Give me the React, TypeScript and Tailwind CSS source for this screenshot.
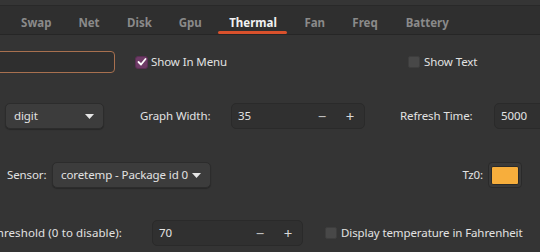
import React from "react";

const tabs: [string, string][] = [
  ["Swap", "w-[56.5px]"],
  ["Net", "w-[49px]"],
  ["Disk", "w-[52px]"],
  ["Gpu", "w-[49.5px]"],
  ["Thermal", "w-[76px]"],
  ["Fan", "w-[47.5px]"],
  ["Freq", "w-[53px]"],
  ["Battery", "w-[71.5px]"],
];

function Arrow() {
  return (
    <svg width="9" height="5" viewBox="0 0 9 5" className="shrink-0">
      <path d="M0 0 L9 0 L4.5 5 Z" fill="#e6e6e6" />
    </svg>
  );
}

function Spin({ value, w }: { value: string; w: string }) {
  return (
    <div className={`${w} shrink-0 h-[26px] flex items-center rounded-[5px] bg-[#303030] border border-[#2a2a2a]`}>
      <div className="flex-1 pl-[6px] text-[#e4e4e4]">{value}</div>
      <div className="w-[28px] flex justify-center text-[#bdbdbd] text-[15px]">−</div>
      <div className="w-[28px] flex justify-center text-[#d8d8d8] text-[15px]">+</div>
    </div>
  );
}

function Check({ on }: { on?: boolean }) {
  return on ? (
    <div className="w-[13px] h-[13px] rounded-[3px] bg-[#6e3b66] border border-[#5a2f54] flex items-center justify-center shrink-0">
      <svg width="10" height="10" viewBox="0 0 10 10">
        <path d="M1.5 5 L4 7.5 L8.5 2" stroke="#ffffff" strokeWidth="1.8" fill="none" strokeLinecap="round" strokeLinejoin="round" />
      </svg>
    </div>
  ) : (
    <div className="w-[12px] h-[12px] rounded-[2px] bg-[#484848] border border-[#3d3d3d] shrink-0" />
  );
}

export default function App() {
  return (
    <div
      className="w-[540px] h-[252px] overflow-hidden bg-[#343434] text-[#e2e2e2] text-[11.5px] tracking-[-0.1px]"
      style={{ fontFamily: '"Noto Sans", "Open Sans", sans-serif' }}
    >
      <div className="h-[6px] bg-[#353535] border-b border-[#292929]" />
      <div className="h-[29px] bg-[#2f2f2f] border-b border-[#262626] flex pl-[8px] font-bold text-[11.5px] tracking-normal">
        {tabs.map(([t, w]) => (
          <div key={t} className={`relative ${w} shrink-0 flex items-center justify-center h-full pt-[6px]`}>
            <span className={t === "Thermal" ? "text-[#f2f2f2]" : "text-[#8a8a8a]"}>{t}</span>
            {t === "Thermal" && (
              <div className="absolute left-[3px] right-[4px] bottom-[0px] h-[3px] rounded-full bg-[#d9512c]" />
            )}
          </div>
        ))}
      </div>

      <div className="flex flex-col pt-[16px]">
        {/* row 1 */}
        <div className="flex items-center h-[22px]">
          <div className="w-[408px] shrink-0 flex items-center">
            <div className="w-[160px] -ml-[45px] h-[22px] rounded-[4px] border border-[#a8704f] bg-[#2f2f2f] shrink-0" />
            <div className="ml-[20px]">
              <Check on />
            </div>
            <span className="ml-[3px]">Show In Menu</span>
          </div>
          <Check />
          <span className="ml-[4px]">Show Text</span>
        </div>

        {/* row 2 */}
        <div className="flex items-center h-[26px] mt-[30px]">
          <div className="ml-[5px] w-[99px] h-[26px] shrink-0 rounded-[5px] bg-[#3c3c3c] border border-[#2c2c2c] shadow-[0_1px_1px_rgba(0,0,0,0.25)] flex items-center justify-between pl-[8px] pr-[9px]">
            <span>digit</span>
            <Arrow />
          </div>
          <div className="w-[127px] shrink-0 pl-[36px]">Graph Width:</div>
          <Spin value="35" w="w-[134px]" />
          <div className="w-[129px] shrink-0 pl-[35px]">Refresh Time:</div>
          <Spin value="5000" w="w-[134px]" />
        </div>

        {/* row 3 */}
        <div className="flex items-center h-[26px] mt-[33px]">
          <div className="w-[52px] shrink-0 pl-[7px]">Sensor:</div>
          <div className="w-[159px] h-[26px] shrink-0 rounded-[5px] bg-[#3c3c3c] border border-[#2c2c2c] shadow-[0_1px_1px_rgba(0,0,0,0.25)] flex items-center justify-between pl-[8px] pr-[9px]">
            <span className="whitespace-nowrap">coretemp - Package id 0</span>
            <Arrow />
          </div>
          <div className="ml-auto flex items-center pr-[18px]">
            <span>Tz0:</span>
            <div className="ml-[5px] w-[34px] h-[26px] rounded-[4px] bg-[#3a3a3a] border border-[#2a2a2a] flex items-center justify-center">
              <div className="w-[28px] h-[19px] rounded-[2px] bg-[#f7ae3c] border border-[#2a2a2a]" />
            </div>
          </div>
        </div>

        {/* row 4 */}
        <div className="flex items-center h-[26px] mt-[32px]">
          <div className="w-[152px] shrink-0 flex justify-end pr-[30px] whitespace-nowrap tracking-[0.1px]">
            Threshold (0 to disable):
          </div>
          <Spin value="70" w="w-[151px]" />
          <div className="ml-[22px]">
            <Check />
          </div>
          <span className="ml-[4px] whitespace-nowrap">Display temperature in Fahrenheit</span>
        </div>
      </div>
    </div>
  );
}
